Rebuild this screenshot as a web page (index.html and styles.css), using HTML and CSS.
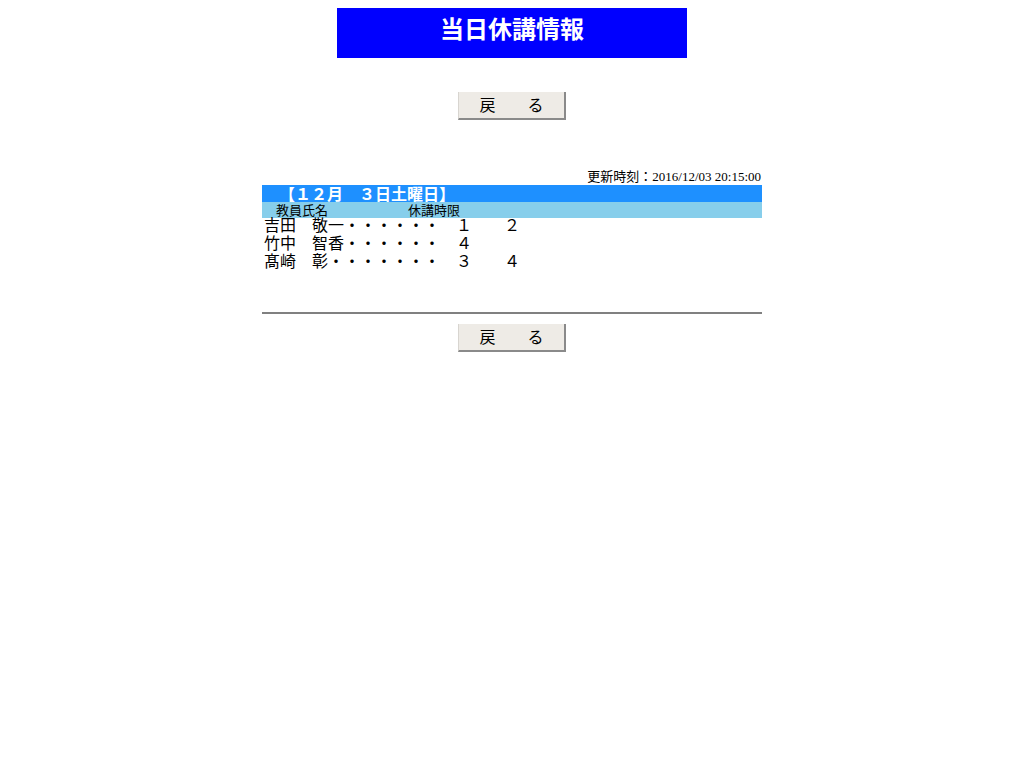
FILE: index.html
```html
<!DOCTYPE html>
<html lang="ja">
<head>
<meta charset="utf-8">
<title>当日休講情報</title>
<link rel="stylesheet" href="styles.css">
</head>
<body>
<div class="title">当日休講情報</div>
<div class="btn-row top"><button class="back">戻　　る</button></div>
<div class="content">
  <div class="updated">更新時刻：2016/12/03 20:15:00</div>
  <div class="date-bar">【１２月　３日土曜日】</div>
  <div class="head-bar"><span class="h-name">教員氏名</span><span class="h-period">休講時限</span></div>
  <div class="rows">
    <div class="row">吉田　敬一・・・・・・　１　　２</div>
    <div class="row">竹中　智香・・・・・・　４</div>
    <div class="row">髙崎　彰・・・・・・・　３　　４</div>
  </div>
  <hr class="rule">
</div>
<div class="btn-row bottom"><button class="back">戻　　る</button></div>
</body>
</html>
```
FILE: styles.css
```css
body {
  margin: 8px;
  background: #fff;
  color: #000;
  font-family: "Liberation Serif", "Noto Sans CJK JP", serif;
}
.title {
  width: 350px;
  height: 50px;
  margin: 0 auto;
  background: #0000ff;
  color: #fff;
  font-size: 24px;
  font-weight: bold;
  line-height: 44px;
  text-align: center;
}
.btn-row {
  display: flex;
  justify-content: center;
}
.btn-row.top { margin-top: 34px; }
.btn-row.bottom { margin-top: 10px; }
.back {
  width: 108px;
  height: 28px;
  padding: 0 0 3px;
  background: #eeebe6;
  border: none;
  border-left: 1px solid #d8d5d0;
  border-right: 2px solid #8a8a8a;
  border-bottom: 2px solid #8a8a8a;
  font-family: "Noto Sans CJK JP", serif;
  font-size: 16px;
  line-height: 20px;
  color: #000;
}
.content {
  width: 500px;
  margin: 48px auto 0;
}
.updated {
  text-align: right;
  font-size: 13px;
  line-height: 17px;
  padding-right: 1px;
}
.date-bar {
  height: 17px;
  background: #1e90ff;
  color: #fff;
  font-weight: bold;
  font-size: 16px;
  line-height: 17px;
  padding-left: 17px;
  font-family: "Noto Sans CJK JP", serif;
}
.head-bar {
  height: 16px;
  background: #87ceeb;
  font-size: 13px;
  line-height: 16px;
  display: flex;
  font-family: "Noto Sans CJK JP", serif;
}
.h-name { margin-left: 14px; }
.h-period { margin-left: 80px; }
.rows {
  margin-top: -3px;
  padding-left: 2px;
  font-family: "Noto Sans CJK JP", serif;
  font-size: 16px;
}
.row {
  height: 18px;
  line-height: 18px;
  white-space: pre;
}
.rule {
  margin: 43px 0 0;
  height: 0;
  border: none;
  border-top: 2px solid #808080;
}
```
